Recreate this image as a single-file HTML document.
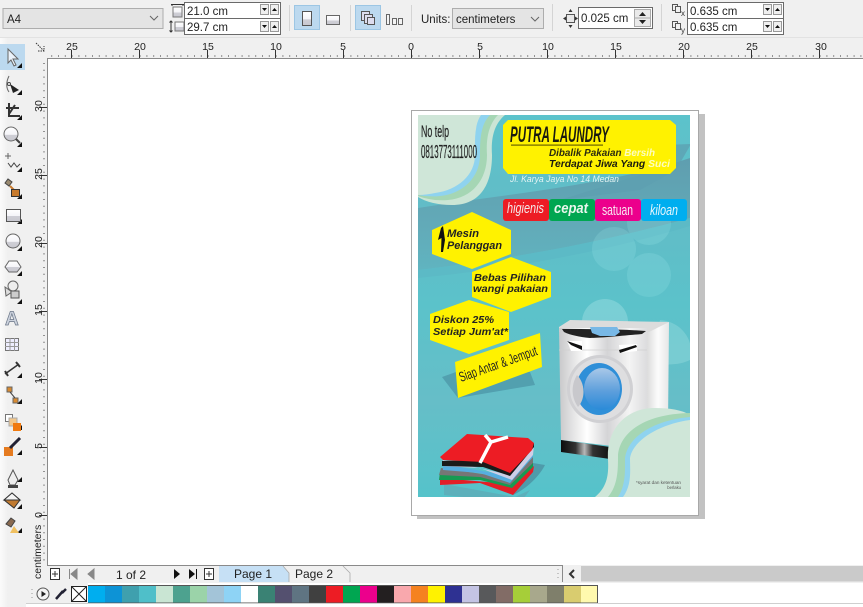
<!DOCTYPE html>
<html><head><meta charset="utf-8"><style>
html,body{margin:0;padding:0;background:#fff;width:863px;height:607px;overflow:hidden}
svg{display:block}
text{font-family:"Liberation Sans",sans-serif}
</style></head><body>
<svg xmlns="http://www.w3.org/2000/svg" width="863" height="607" viewBox="0 0 863 607">
<defs>
<linearGradient id="bg" x1="0" y1="0" x2="0" y2="1"><stop offset="0" stop-color="#5cc3cb"/><stop offset=".25" stop-color="#62bcc7"/><stop offset=".5" stop-color="#5bc2ca"/><stop offset=".75" stop-color="#66bec8"/><stop offset="1" stop-color="#55c3ca"/></linearGradient>
<linearGradient id="band" x1="0" y1="0" x2="0" y2="1"><stop offset="0" stop-color="#5f9eaf"/><stop offset=".6" stop-color="#62aab8"/><stop offset="1" stop-color="#60b4c0"/></linearGradient>
<linearGradient id="tbar" x1="0" y1="0" x2="1" y2="0"><stop offset="0" stop-color="#fbfbfb"/><stop offset=".3" stop-color="#f0f0f0"/><stop offset="1" stop-color="#f0f0f0"/></linearGradient>
<linearGradient id="body" x1="0" y1="0" x2="1" y2="0"><stop offset="0" stop-color="#c8c8ca"/><stop offset=".18" stop-color="#e8e8e8"/><stop offset=".32" stop-color="#fff"/><stop offset=".55" stop-color="#d4d4d6"/><stop offset=".8" stop-color="#f4f4f4"/><stop offset="1" stop-color="#dcdcde"/></linearGradient>
<linearGradient id="side" x1="0" y1="0" x2="1" y2="0"><stop offset="0" stop-color="#dcdcdc"/><stop offset=".5" stop-color="#fcfcfc"/><stop offset="1" stop-color="#e6e6e6"/></linearGradient>
<linearGradient id="base" x1="0" y1="0" x2="1" y2="0"><stop offset="0" stop-color="#0c0c0c"/><stop offset=".3" stop-color="#333"/><stop offset=".48" stop-color="#b8b8b8"/><stop offset=".65" stop-color="#333"/><stop offset="1" stop-color="#111"/></linearGradient>
<linearGradient id="glass" x1="0" y1="0" x2="0" y2="1"><stop offset="0" stop-color="#a9c8e8"/><stop offset=".55" stop-color="#5d9fdc"/><stop offset="1" stop-color="#2a8ad8"/></linearGradient>
<linearGradient id="icon" x1="0" y1="0" x2="0" y2="1"><stop offset="0" stop-color="#fff"/><stop offset=".55" stop-color="#f4f4f8"/><stop offset=".56" stop-color="#cfcfd6"/><stop offset="1" stop-color="#c8c8d0"/></linearGradient>
<clipPath id="poster"><rect x="418" y="115" width="272" height="382"/></clipPath>
</defs>

<!-- canvas -->
<rect width="863" height="607" fill="#fff"/>

<!-- page and shadow -->
<rect x="417" y="114" width="288" height="405" fill="#c2c2c2"/>
<rect x="411.500" y="110.500" width="287" height="405" fill="#fff" stroke="#a8a8a8"/>

<!-- poster -->
<g clip-path="url(#poster)">
<rect x="418" y="115" width="272" height="382" fill="url(#bg)"/>
<path d="M418 208 C500 195 610 185 690 158 V218 C610 240 520 258 418 270Z" fill="url(#band)"/>
<path d="M418 270 C520 258 610 240 690 218 V226 C610 250 520 268 418 278Z" fill="#5cbac6"/>
<path d="M640 146 L691 144 L676 170 L640 190 L560 200 L640 175Z" fill="#5d9fb0" opacity=".75"/>
<g fill="#a8f0f0" opacity=".18"><circle cx="649" cy="223" r="22"/><circle cx="614" cy="249" r="22"/><circle cx="649" cy="275" r="22"/></g>
<circle cx="605" cy="322" r="23" fill="#c0f0f0" opacity=".3"/>
<path d="M660 320 C685 322 695 345 690 360 C680 365 665 366 650 362Z" fill="#b0e8e8" opacity=".3"/>
<path d="M442 377 L456 372 L530 372 L535 385 L458 398Z" fill="#4f9aaa" opacity=".85"/>

<!-- top-left blob -->
<path d="M418 115 H505 C493 125 491 140 492 155 C492 185 480 205 452 205 C438 205 426 202 418 197Z" fill="#cbe5d5"/>
<path d="M418 115 H498 C488 125 486 140 487 155 C487 180 472 198 448 200 C436 201 426 199 418 196Z" fill="#a5d6b4"/>
<path d="M418 115 H490 C480 125 480 142 480 155 C480 178 462 194 440 196 C432 197 424 196 418 195Z" fill="#8fd3ef"/>
<path d="M418 115 H481 C474 125 475 142 475 155 C475 175 458 190 435 193 C430 194 424 195 418 195Z" fill="#cfe6d8"/>

<!-- title box -->
<path d="M508 120 H670 L676 125 V168 L670 174 H508 L503 168 V125Z" fill="#fff200"/>
<text x="510" y="142" font-size="22" font-style="italic" font-weight="700" fill="#1a1a10" textLength="99" lengthAdjust="spacingAndGlyphs">PUTRA LAUNDRY</text>
<rect x="511" y="144.500" width="92" height="1.200" fill="#6b6400"/>
<text x="549" y="156" font-size="10.500" font-style="italic" font-weight="700" fill="#2a2a10" textLength="106" lengthAdjust="spacingAndGlyphs">Dibalik Pakaian <tspan fill="#fdfdc0">Bersih</tspan></text>
<text x="549" y="167" font-size="10.500" font-style="italic" font-weight="700" fill="#1a1a10" textLength="121" lengthAdjust="spacingAndGlyphs">Terdapat Jiwa Yang <tspan fill="#fdfdc0">Suci</tspan></text>
<text x="510" y="182" font-size="9" font-style="italic" fill="#e4f4f4" textLength="109" lengthAdjust="spacingAndGlyphs">Jl. Karya Jaya No 14 Medan</text>
<text x="421" y="137" font-size="17" fill="#222" stroke="#222" stroke-width=".2" textLength="28" lengthAdjust="spacingAndGlyphs">No telp</text>
<text x="421" y="158" font-size="18" fill="#222" stroke="#222" stroke-width=".2" textLength="56" lengthAdjust="spacingAndGlyphs">0813773111000</text>

<!-- tags -->
<rect x="503" y="199" width="46" height="22" rx="3" fill="#ed1c24"/>
<rect x="549" y="199" width="46" height="22" rx="3" fill="#00a651"/>
<rect x="595" y="199" width="46" height="22" rx="3" fill="#ec008c"/>
<rect x="641" y="199" width="46" height="22" rx="3" fill="#00aeef"/>
<text x="507" y="213" font-size="15" font-style="italic" fill="#f4e8e8" textLength="37" lengthAdjust="spacingAndGlyphs">higienis</text>
<text x="554" y="213" font-size="15" font-style="italic" font-weight="700" fill="#e8f6ec" textLength="34" lengthAdjust="spacingAndGlyphs">cepat</text>
<text x="602" y="215" font-size="15" fill="#f8e8f2" textLength="31" lengthAdjust="spacingAndGlyphs">satuan</text>
<text x="650" y="215" font-size="15" font-style="italic" fill="#e8f6fc" textLength="28" lengthAdjust="spacingAndGlyphs">kiloan</text>

<!-- hexagons -->
<path d="M472 212 L511 230 V254 L472 269 L432 254 V230Z" fill="#fff200"/>
<path d="M441 228 L443 226 L445 240 L443 252 L441 252 L441.500 238 L438 240Z" fill="#111"/>
<text x="447" y="237" font-size="11" font-style="italic" font-weight="700" fill="#222" textLength="32" lengthAdjust="spacingAndGlyphs">Mesin</text>
<text x="447" y="249" font-size="11" font-style="italic" font-weight="700" fill="#222" textLength="55" lengthAdjust="spacingAndGlyphs">Pelanggan</text>
<path d="M511 257 L551 272 V297 L511 312 L472 297 V272Z" fill="#fff200"/>
<text x="474" y="281" font-size="10.500" font-style="italic" font-weight="700" fill="#222" textLength="72" lengthAdjust="spacingAndGlyphs">Bebas Pilihan</text>
<text x="473" y="292" font-size="10.500" font-style="italic" font-weight="700" fill="#222" textLength="75" lengthAdjust="spacingAndGlyphs">wangi pakaian</text>
<path d="M469 300 L509 312 V340 L469 354 L430 340 V314Z" fill="#fff200"/>
<text x="433" y="323" font-size="10.500" font-style="italic" font-weight="700" fill="#222" textLength="61" lengthAdjust="spacingAndGlyphs">Diskon 25%</text>
<text x="433" y="335" font-size="10.500" font-style="italic" font-weight="700" fill="#222" textLength="75" lengthAdjust="spacingAndGlyphs">Setiap Jum'at*</text>
<path d="M455 362 L540 333 L542 367 L458 398Z" fill="#fff200"/>
<text transform="translate(461 382) rotate(-19.500)" font-size="14" fill="#222" textLength="82" lengthAdjust="spacingAndGlyphs">Siap Antar &amp; Jemput</text>

<!-- washing machine -->
<path d="M559 327 L570 320 L669 322 L647 334 L559 332Z" fill="#dcdcdc"/>
<path d="M647 333 L669 322 L668 425 L647 425Z" fill="url(#side)"/>
<path d="M559 328 H647 V450 L561 440Z" fill="url(#body)"/>
<path d="M562 329 C590 329 620 329 646 331 L642 334 C620 336 600 338 590 338 C580 337 570 335 564 332Z" fill="#222"/>
<path d="M590 327 H617 L620 332 L615 336 H600 L592 333Z" fill="#78b8e6"/>
<path d="M559 350 H647" stroke="#cfcfcf" stroke-width=".8"/>
<path d="M567 341 H582 V351 H571Z" fill="#fff"/><path d="M567 341 L582 346 L582 350 L571 345Z" fill="#111"/>
<path d="M619 345 L637 344 L637 351 L620 353Z" fill="#fff"/><path d="M619 350 L636 345 L637 347 L620 353Z" fill="#111"/>
<ellipse cx="600" cy="389" rx="33" ry="34" fill="#d0d0d3"/>
<ellipse cx="600" cy="389" rx="30" ry="31" fill="#dedee0"/>
<ellipse cx="599" cy="389" rx="23" ry="26" fill="#2f8fd8"/>
<ellipse cx="602" cy="389" rx="18" ry="21" fill="url(#glass)"/>
<path d="M577 375 C571 385 571 397 578 407 C586 398 585 383 577 375Z" fill="#c8c8cc"/>
<path d="M561 440 L610 447 V459 L561 452Z" fill="url(#base)"/>

<!-- clothes -->
<path d="M444 484 L515 497 L530 490 L520 503 L444 495Z" fill="#6b8da0" opacity=".35"/>
<path d="M533 463 L545 465 C540 475 528 488 513 495 L520 470Z" fill="#4e97a6" opacity=".9"/>
<path d="M440 485 L480 483 L513 495 L533 472 L534 466 L510 484 L440 478Z" fill="#e31e27"/>
<path d="M439 480 L480 480 L512 488 L533 467 L533 458 L510 480 L440 472Z" fill="#169a52"/>
<path d="M439 475 L480 477 L510 485 L533 463 L533 455 L510 478 L441 468Z" fill="#767676"/>
<path d="M443 470 L480 473 L510 483 L533 457 L533 450 L510 476 L443 464Z" fill="#56aee0"/>
<path d="M442 466 L480 468 L512 480 L533 455 L534 445 L510 475 L443 460Z" fill="#cfcfe6"/>
<path d="M442 461 L442 466 L483 467 L510 476 L534 447 L534 443 L510 470 L484 460Z" fill="#1a1a1a"/>
<path d="M440 457 L467 434 L528 438 L534 443 L532 450 L510 473 L483 462 L443 460Z" fill="#ed1c24"/>
<path d="M485 435 L491 442 L508 437 M491 442 L480 463" fill="none" stroke="#fff" stroke-width="3.500"/>

<!-- bottom-right blob -->
<path d="M595 497 C606 488 609 477 608 460 C606 430 625 408 655 408 C670 408 682 410 690 415 V497Z" fill="#cfe6d8"/>
<path d="M608 497 C618 485 618 470 618 455 C620 432 645 414 690 413 V497Z" fill="#a5d6b4"/>
<path d="M618 497 C626 485 625 470 625 458 C628 436 655 420 690 417 V497Z" fill="#8fd3ef"/>
<path d="M623 497 C632 485 630 470 630 458 C633 440 660 424 690 420 V497Z" fill="#cfe6d8"/>
<text x="681" y="484" text-anchor="end" font-size="4.200" fill="#555" textLength="45" lengthAdjust="spacingAndGlyphs">*syarat dan ketentuan</text>
<text x="681" y="489" text-anchor="end" font-size="4.200" fill="#555">berlaku</text>
</g>

<!-- top toolbar -->
<rect width="863" height="37" fill="#f0f0f0"/>
<rect y="37" width="863" height="1" fill="#e2e2e2"/>
<rect x="3" y="8.500" width="160" height="20" fill="#e4e4e4" stroke="#adadad"/>
<text x="7" y="23" font-size="11.500" fill="#222">A4</text>
<path d="M150 16 L154 20 L158 16" fill="none" stroke="#666"/>
<rect x="173" y="7" width="9" height="10" fill="url(#icon)" stroke="#777"/><path d="M171 4.500H184M172 4v2M183 4v2" stroke="#333" fill="none"/>
<rect x="175" y="22" width="9" height="9" fill="url(#icon)" stroke="#777"/><path d="M171 21v11M169.500 22.500L171 21l1.500 1.500M169.500 30.500L171 32l1.500-1.500" stroke="#333" fill="none"/>
<rect x="184.500" y="2.500" width="96" height="32" fill="#fff" stroke="#6a6a6a"/><path d="M185 18.500H280" stroke="#6a6a6a"/>
<text x="187" y="15" font-size="11.500" fill="#222">21.0 cm</text>
<text x="187" y="31" font-size="11.500" fill="#222">29.7 cm</text>
<g fill="#efefef" stroke="#999"><rect x="260.500" y="4.500" width="8" height="10"/><rect x="270.500" y="4.500" width="8" height="10"/><rect x="260.500" y="21.500" width="8" height="10"/><rect x="270.500" y="21.500" width="8" height="10"/></g>
<g fill="#111"><path d="M262 8h5l-2.500 3zM272 11h5l-2.500-3zM262 25h5l-2.500 3zM272 28h5l-2.500-3z"/></g>
<g fill="#bcd9ef" stroke="#9cc6e4"><rect x="294.500" y="5.500" width="25" height="24"/><rect x="355.500" y="5.500" width="25" height="24"/></g>
<rect x="302.500" y="11.500" width="9" height="14" fill="url(#icon)" stroke="#555"/>
<rect x="326.500" y="15.500" width="13" height="9" fill="url(#icon)" stroke="#666"/>
<g fill="#dde" stroke="#555"><rect x="361.500" y="11.500" width="8" height="9"/><rect x="364.500" y="14.500" width="8" height="9"/><rect x="367.500" y="17.500" width="7" height="7"/></g>
<g fill="#f4f4f4" stroke="#666"><rect x="386.500" y="14.500" width="3" height="10"/><rect x="392.500" y="18.500" width="4" height="6"/><rect x="398.500" y="18.500" width="4" height="6"/></g>
<path d="M289.500 5V31M350.500 5V31M411.500 5V31M552.500 4V31M661.500 4V31" stroke="#d4d4d4"/>
<text x="421" y="23" font-size="11.500" fill="#222">Units:</text>
<rect x="452.500" y="8.500" width="91" height="20" fill="#e4e4e4" stroke="#adadad"/>
<text x="456" y="23" font-size="11.500" fill="#222">centimeters</text>
<path d="M531 17 L535 21 L539 17" fill="none" stroke="#666"/>
<rect x="566.500" y="14.500" width="8" height="8" fill="#e8e8e8" stroke="#555"/><path d="M570.500 9l-2 3h4zM570.500 28l-2-3h4zM563 18.500l3-2v4zM578 18.500l-3-2v4z" fill="#333"/>
<rect x="578.500" y="7.500" width="74" height="21" fill="#fff" stroke="#6a6a6a"/>
<text x="581" y="22" font-size="11.500" fill="#222">0.025 cm</text>
<rect x="634.500" y="9.500" width="16" height="17" fill="#eaeaea" stroke="#aaa"/><path d="M635 18H650" stroke="#aaa"/>
<path d="M639 16h7l-3.500-4zM639 20h7l-3.500 4z" fill="#222"/>
<g fill="#f0f0f0" stroke="#555"><rect x="672.500" y="4.500" width="5" height="6"/><rect x="675.500" y="6.500" width="5" height="6"/><rect x="672.500" y="21.500" width="5" height="6"/><rect x="675.500" y="23.500" width="5" height="6"/></g>
<text x="681" y="16" font-size="8" fill="#333">x</text><text x="681" y="33" font-size="8" fill="#333">y</text>
<rect x="687.500" y="2.500" width="96" height="32" fill="#fff" stroke="#6a6a6a"/><path d="M688 18.500H783" stroke="#6a6a6a"/>
<text x="690" y="15" font-size="11.500" fill="#222">0.635 cm</text>
<text x="690" y="31" font-size="11.500" fill="#222">0.635 cm</text>
<g fill="#efefef" stroke="#999"><rect x="763.500" y="4.500" width="8" height="10"/><rect x="773.500" y="4.500" width="8" height="10"/><rect x="763.500" y="21.500" width="8" height="10"/><rect x="773.500" y="21.500" width="8" height="10"/></g>
<g fill="#111"><path d="M765 8h5l-2.500 3zM775 11h5l-2.500-3zM765 25h5l-2.500 3zM775 28h5l-2.500-3z"/></g>

<!-- rulers -->
<rect x="0" y="38" width="863" height="20" fill="#f0f0f0"/>
<rect x="26" y="38" width="21" height="545" fill="#f0f0f0"/>
<path d="M47 58.500H863" stroke="#8a8a8a"/>
<path d="M47.500 58V565" stroke="#8a8a8a"/>
<path d="M36 43l8 8M38 51h6v-5" stroke="#333" stroke-width="1" stroke-dasharray="1.500 1" fill="none"/>
<path d="M50 56H863" stroke="#333" stroke-dasharray="1 5.800" stroke-dashoffset="-1.200"/>
<path d="M44 62V565" stroke="#333" stroke-dasharray="1 5.800" stroke-dashoffset="-1"/>
<g stroke="#333"><path d="M71.500 50V58M139.500 50V58M207.500 50V58M275.500 50V58M343.500 50V58M411.500 50V58M479.500 50V58M547.500 50V58M615.500 50V58M683.500 50V58M751.500 50V58M819.500 50V58"/>
<path d="M39 107.500H47M39 175.500H47M39 243.500H47M39 311.500H47M39 379.500H47M39 447.500H47M39 515.500H47"/></g>
<g font-size="10.500" fill="#222" text-anchor="middle">
<text x="72" y="50">25</text><text x="140" y="50">20</text><text x="208" y="50">15</text><text x="276" y="50">10</text><text x="343" y="50">5</text><text x="411" y="50">0</text><text x="480" y="50">5</text><text x="548" y="50">10</text><text x="616" y="50">15</text><text x="684" y="50">20</text><text x="752" y="50">25</text><text x="821" y="50">30</text>
<text transform="translate(42 106) rotate(-90)">30</text><text transform="translate(42 174) rotate(-90)">25</text><text transform="translate(42 242) rotate(-90)">20</text><text transform="translate(42 310) rotate(-90)">15</text><text transform="translate(42 378) rotate(-90)">10</text><text transform="translate(42 446) rotate(-90)">5</text><text transform="translate(42 515) rotate(-90)">0</text>
</g>
<text transform="translate(41 579) rotate(-90)" font-size="10.500" fill="#222">centimeters</text>

<!-- left toolbar -->
<rect x="0" y="38" width="26" height="569" fill="url(#tbar)"/>
<rect x="0" y="44" width="25" height="26" fill="#bcd9ef"/>
<path d="M8 49 L8 63 L11 60 L14 66 L16 65 L13 59 L18 59Z" fill="#eaf2fa" stroke="#666"/>
<g fill="#111"><path d="M22 68h-5l5-5zM22 95h-5l5-5zM22 120h-5l5-5zM22 147h-5l5-5zM22 172h-5l5-5zM22 199h-5l5-5zM22 224h-5l5-5zM22 251h-5l5-5zM22 276h-5l5-5zM22 304h-5l5-5zM22 378h-5l5-5zM22 404h-5l5-5zM22 430h-5l5-5zM22 455h-5l5-5zM22 482h-5l5-5zM22 509h-5l5-5zM22 533h-5l5-5z"/></g>
<path d="M9 76C6 82 6 88 9 92" fill="none" stroke="#666"/><path d="M10 84L19 90L13 93Z" fill="#222"/><circle cx="9" cy="84" r="1.500" fill="#fff" stroke="#444"/>
<path d="M6 108H19M9 103V116H20M15 105L9 114" stroke="#333" stroke-width="2" fill="none"/>
<circle cx="11" cy="134" r="7" fill="url(#icon)" stroke="#666"/><path d="M16 139L20 143" stroke="#444" stroke-width="2"/>
<path d="M5 156H11M8 153V159" stroke="#666"/><path d="M8 163l3 4 3-4 3 4 3-3" fill="none" stroke="#444"/>
<path d="M5 183L8 179L12 182L9 186Z" fill="#9a8a70" stroke="#444"/><path d="M10 186L14 190" stroke="#c77a2c" stroke-width="2"/><rect x="11.500" y="189.500" width="8" height="7" fill="#c77a2c" stroke="#333"/>
<rect x="6.500" y="209.500" width="14" height="12" fill="url(#icon)" stroke="#555"/>
<circle cx="13" cy="241" r="7" fill="url(#icon)" stroke="#666"/>
<path d="M9 261H17L21 267L17 272H9L5 267Z" fill="url(#icon)" stroke="#666"/>
<circle cx="13" cy="286" r="5" fill="#eee" stroke="#666"/><path d="M5 287L12 292L6 296Z" fill="#ddd" stroke="#666"/><rect x="11" y="291" width="8" height="7" fill="#ccc" stroke="#555"/>
<text x="5" y="325" font-size="19" font-weight="700" fill="#cdd3de" stroke="#6a7688" stroke-width=".7">A</text>
<rect x="5.500" y="338.500" width="13" height="12" fill="#eef" stroke="#777"/><path d="M5 342.500H19M5 346.500H19M10 338V351M14.500 338V351" stroke="#999"/>
<path d="M5 374L19 364" stroke="#333" stroke-width="1.500"/><path d="M5 371L8 376M16 362L20 367" stroke="#333" stroke-width="2"/>
<rect x="7" y="387" width="5" height="5" fill="#d88a30" stroke="#666"/><rect x="13" y="398" width="5" height="5" fill="#d88a30" stroke="#666"/><path d="M10 392L15 398" stroke="#444"/>
<rect x="5.500" y="414.500" width="7" height="7" fill="#fff" stroke="#777"/><rect x="9" y="418" width="8" height="8" fill="#f3c78a" stroke="#aaa"/><rect x="13" y="423" width="8" height="8" fill="#f07a10"/>
<rect x="4" y="447" width="9" height="9" fill="#e57b20"/><path d="M10 448L20 438" stroke="#223" stroke-width="3"/>
<path d="M13 470L8 480L10 485H15L18 480Z" fill="#eee" stroke="#555"/><rect x="8" y="485" width="10" height="3" fill="#444"/>
<path d="M4 500L12 493L20 500L14 508Z" fill="#c07a30" stroke="#333"/><path d="M4 500L12 493L20 500Z" fill="#f4f4f4" stroke="#333"/>
<path d="M6 524L11 518L15 521L11 527Z" fill="#8a6a50" stroke="#444"/><path d="M10 533L14 526L19 533Z" fill="#f0c060"/>

<!-- bottom bars -->
<rect x="47" y="565" width="816" height="18" fill="#f0f0f0"/>
<path d="M47 565.500H563" stroke="#8a8a8a"/><path d="M562.500 565V582" stroke="#8a8a8a"/>
<rect x="50.500" y="568.500" width="9" height="11" fill="#fff" stroke="#333"/><path d="M52 574H58M55 571V577" stroke="#333"/>
<path d="M69.500 569V579M77 569L71 574L77 579ZM94 569L88 574L94 579Z" fill="#888" stroke="#888"/>
<text x="116" y="579" font-size="12" fill="#222">1 of 2</text>
<path d="M174 569L180 574L174 579Z" fill="#111"/><path d="M189 569L195 574L189 579Z" fill="#111"/><path d="M196.500 569V579" stroke="#111"/>
<rect x="204.500" y="568.500" width="9" height="11" fill="#fff" stroke="#333"/><path d="M206 574H212M209 571V577" stroke="#333"/>
<path d="M219 566H283L289 573V582H219Z" fill="#c6e0f5"/>
<path d="M283 566L289 573V582M343 566L350 573V582" fill="none" stroke="#aaa" stroke-width=".8"/>
<text x="234" y="578" font-size="12" fill="#222">Page 1</text>
<text x="295" y="578" font-size="12" fill="#222">Page 2</text>
<path d="M558 569v1M558 573v1M558 577v1" stroke="#999"/>
<path d="M574 570L570 574L574 578" fill="none" stroke="#333" stroke-width="2"/>
<rect x="581" y="566" width="282" height="15.500" fill="#cacaca"/>
<rect x="47" y="583" width="816" height="24" fill="#fff"/>
<rect x="26" y="583" width="62" height="21" fill="#f0f0f0"/>
<path d="M32 589v1M32 593v1M32 597v1" stroke="#999"/>
<circle cx="43" cy="594" r="6" fill="#f4f4f4" stroke="#555"/><path d="M41.500 591L46 594L41.500 597Z" fill="#222"/>
<path d="M56 599L63 591M62 593L66 589" stroke="#223" stroke-width="2.500"/>
<rect x="71.500" y="586.500" width="15" height="15" fill="#fff" stroke="#222"/><path d="M72 587L86 601M86 587L72 601" stroke="#222"/>
<g>
<rect x="88" y="585" width="17" height="18" fill="#00aeef"/><rect x="105" y="585" width="17" height="18" fill="#0d93d6"/><rect x="122" y="585" width="17" height="18" fill="#3fa0ae"/><rect x="139" y="585" width="17" height="18" fill="#4fbfc9"/><rect x="156" y="585" width="17" height="18" fill="#c9e5d3"/><rect x="173" y="585" width="17" height="18" fill="#4da28f"/><rect x="190" y="585" width="17" height="18" fill="#9bd3a9"/><rect x="207" y="585" width="17" height="18" fill="#a3c4d8"/><rect x="224" y="585" width="17" height="18" fill="#8ed3f5"/><rect x="241" y="585" width="17" height="18" fill="#ffffff"/><rect x="258" y="585" width="17" height="18" fill="#3a8274"/><rect x="275" y="585" width="17" height="18" fill="#54506f"/><rect x="292" y="585" width="17" height="18" fill="#5f7482"/><rect x="309" y="585" width="17" height="18" fill="#404040"/><rect x="326" y="585" width="17" height="18" fill="#ed1c24"/><rect x="343" y="585" width="17" height="18" fill="#00a651"/><rect x="360" y="585" width="17" height="18" fill="#ec008c"/><rect x="377" y="585" width="17" height="18" fill="#231f20"/><rect x="394" y="585" width="17" height="18" fill="#f9a8ad"/><rect x="411" y="585" width="17" height="18" fill="#f58220"/><rect x="428" y="585" width="17" height="18" fill="#fff200"/><rect x="445" y="585" width="17" height="18" fill="#2e3192"/><rect x="462" y="585" width="17" height="18" fill="#c4c4e4"/><rect x="479" y="585" width="17" height="18" fill="#58595b"/><rect x="496" y="585" width="17" height="18" fill="#826c66"/><rect x="513" y="585" width="17" height="18" fill="#a6ce39"/><rect x="530" y="585" width="17" height="18" fill="#a8a88c"/><rect x="547" y="585" width="17" height="18" fill="#7f7f6b"/><rect x="564" y="585" width="17" height="18" fill="#d9cc6f"/><rect x="581" y="585" width="17" height="18" fill="#fff9ae"/>
</g>
<path d="M88 585.500H598M88 603H598M597.500 585V603" stroke="#555" fill="none"/>
<path d="M26 603.500H863" stroke="#cfcfcf"/>
</svg>
</body></html>
